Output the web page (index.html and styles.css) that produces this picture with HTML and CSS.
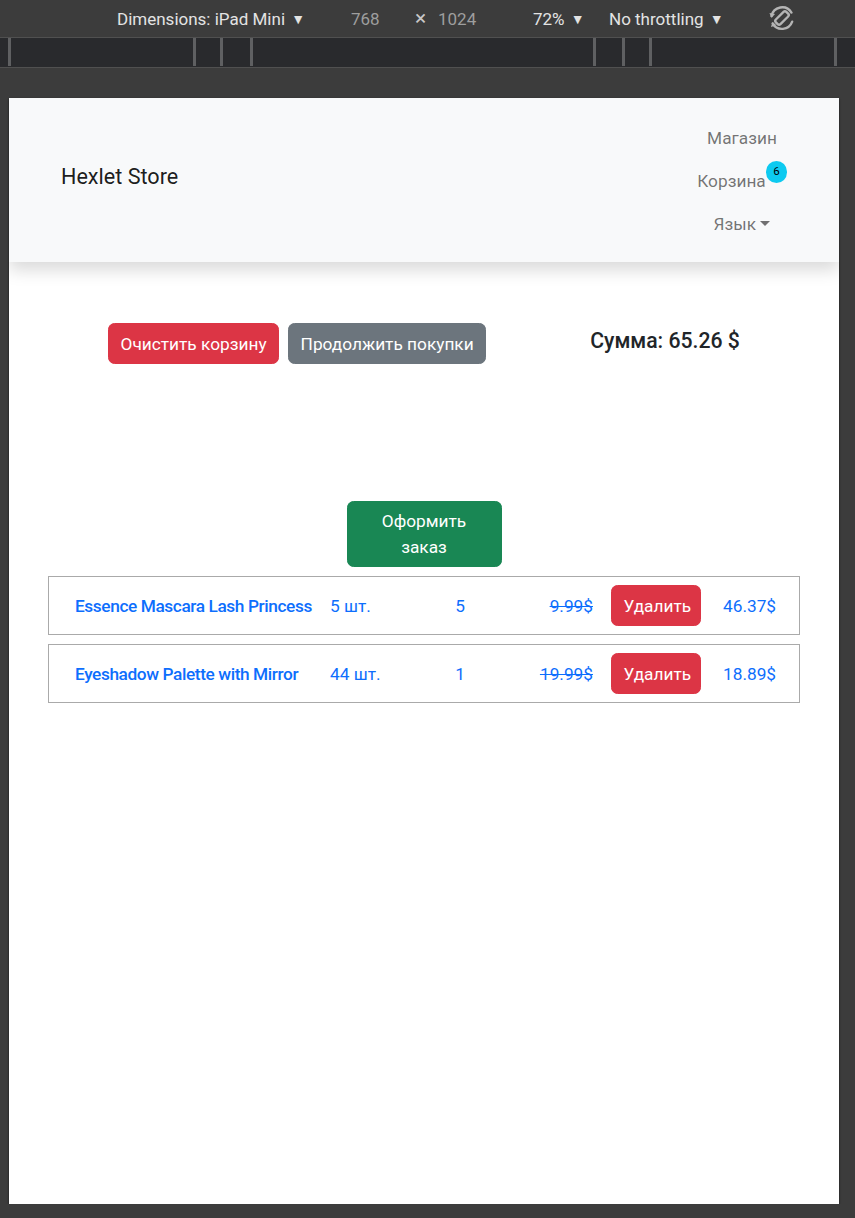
FILE: index.html
```html
<!DOCTYPE html>
<html lang="ru">
<head>
    <meta charset="UTF-8">
    <meta name="viewport" content="width=device-width, initial-scale=1.0">
    <title>Hexlet Store</title>
    <link rel="stylesheet" href="styles.css">
</head>
<body>
    <div class="devbar">
        <span class="dev dims">Dimensions: iPad Mini <span class="tri">&#9660;</span></span>
        <span class="dev num w768">768</span>
        <span class="dev cross">&#215;</span>
        <span class="dev num h1024">1024</span>
        <span class="dev zoom">72% <span class="tri">&#9660;</span></span>
        <span class="dev throttle">No throttling <span class="tri">&#9660;</span></span>
        <svg class="rotate" viewBox="0 0 24 24" width="26" height="26">
            <g fill="none" stroke="#b4b4b4" stroke-width="2.2" stroke-linecap="round">
                <rect x="9" y="5.2" width="6" height="13.6" rx="1.8" transform="rotate(45 12 12)"/>
                <path d="M2.3 10.3A10 10 0 0 1 20.7 7"/>
                <path d="M21.4 15.4A10 10 0 0 1 3.3 17"/>
            </g>
            <path d="M0.4 7.4L2.3 11.8L5.6 8.4Z" fill="#b4b4b4"/>
            <path d="M1.8 20.4L3.3 15.6L6.8 18.6Z" fill="#b4b4b4"/>
        </svg>
    </div>
    <div class="ruler">
        <span class="seg s1"></span>
        <span class="seg s2"></span>
        <span class="seg s3"></span>
        <span class="seg s4"></span>
        <span class="seg s5"></span>
        <span class="seg s6"></span>
        <span class="seg s7"></span>
        <span class="seg s8"></span>
    </div>

    <div class="viewport">
        <nav class="navbar">
            <a class="brand" href="#">Hexlet Store</a>
            <ul class="nav">
                <li><a class="nav-link" href="#">Магазин</a></li>
                <li><a class="nav-link" href="#"><span class="cart-label">Корзина<span class="badge">6</span></span></a></li>
                <li><a class="nav-link dropdown" href="#">Язык</a></li>
            </ul>
        </nav>

        <main class="cart">
            <div class="actions">
                <button class="btn btn-danger">Очистить корзину</button>
                <button class="btn btn-secondary">Продолжить покупки</button>
                <h5 class="sum">Сумма: 65.26 $</h5>
            </div>

            <button class="btn btn-success checkout">Оформить заказ</button>

            <div class="items">
                <div class="item">
                    <a class="name" href="#">Essence Mascara Lash Princess</a>
                    <span>5 шт.</span>
                    <span class="count">5</span>
                    <span class="price"><s>9.99$</s></span>
                    <button class="btn btn-danger remove">Удалить</button>
                    <span class="total">46.37$</span>
                </div>
                <div class="item">
                    <a class="name" href="#">Eyeshadow Palette with Mirror</a>
                    <span>44 шт.</span>
                    <span class="count">1</span>
                    <span class="price"><s>19.99$</s></span>
                    <button class="btn btn-danger remove">Удалить</button>
                    <span class="total">18.89$</span>
                </div>
            </div>
        </main>
    </div>
</body>
</html>
```

FILE: styles.css
```css
*{
    margin: 0;
    padding: 0;
    box-sizing: border-box;
}
body{
    background-color: #3c3c3c;
    font-family: Roboto, "Noto Sans", sans-serif;
}

/* devtools toolbar */
.devbar{
    height: 37px;
    display: flex;
    align-items: center;
    color: #e3e3e3;
    font-size: 17px;
}
.dev{
    display: inline-block;
    white-space: nowrap;
}
.dims{
    margin-left: 117px;
    width: 234px;
}
.tri{
    font-size: 14px;
    margin-left: 2px;
    vertical-align: 1px;
}
.num{
    color: #9e9e9e;
}
.w768{
    width: 64px;
}
.cross{
    width: 23px;
    font-size: 21px;
    line-height: 1;
    color: #c8c8c8;
}
.h1024{
    width: 95px;
}
.zoom{
    width: 76px;
}
.throttle{
    width: 160px;
}
.rotate{
    display: block;
    margin-top: -2px;
}

.ruler{
    height: 31px;
    display: flex;
    background-color: #292a2d;
    border-top: 1px solid #505050;
    border-bottom: 1px solid #505050;
}
.seg{
    height: 28px;
    border-right: 3px solid #5f6062;
}
.s1{ width: 11px; }
.s2{ width: 185px; }
.s3{ width: 27px; }
.s4{ width: 30px; }
.s5{ width: 343px; }
.s6{ width: 29px; }
.s7{ width: 27px; }
.s8{ width: 185px; }

/* emulated page */
.viewport{
    margin: 30px 0 0 9px;
    width: 830px;
    height: 1106px;
    background-color: #fff;
    box-shadow: 0 1px 2px rgba(0,0,0,.7);
    font-size: 17.28px;
    line-height: 1.5;
    color: #212529;
    overflow: hidden;
}

.navbar{
    position: relative;
    height: 164px;
    display: flex;
    align-items: center;
    justify-content: space-between;
    padding: 0 42px 0 52px;
    background-color: #f8f9fa;
    box-shadow: 0 8px 16px rgba(0,0,0,.15);
}
.brand{
    font-size: 21.6px;
    color: rgba(0,0,0,.9);
    text-decoration: none;
    margin-top: -6px;
}
.nav{
    list-style: none;
    width: 110px;
    text-align: center;
    margin-top: 2px;
}
.nav-link{
    display: block;
    padding: 8.6px 0;
    line-height: 26px;
    color: rgba(0,0,0,.55);
    text-decoration: none;
}
.cart-label{
    position: relative;
    margin-right: 21px;
}
.badge{
    position: absolute;
    left: 100%;
    top: -10px;
    width: 21.6px;
    height: 21.6px;
    border-radius: 50%;
    background-color: #0dcaf0;
    color: #000;
    font-size: 11.5px;
    line-height: 21.6px;
    text-align: center;
}
.dropdown::after{
    content: "";
    display: inline-block;
    margin-left: .255em;
    vertical-align: .255em;
    border-top: .3em solid;
    border-right: .3em solid transparent;
    border-left: .3em solid transparent;
}

.btn{
    font-family: inherit;
    font-size: 17.28px;
    line-height: 26px;
    padding: 6.5px 11.5px;
    border: 1px solid transparent;
    border-radius: 6.5px;
    color: #fff;
    cursor: pointer;
}
.btn-danger{
    background-color: #dc3545;
    border-color: #dc3545;
}
.btn-secondary{
    background-color: #6c757d;
    border-color: #6c757d;
}
.btn-success{
    background-color: #198754;
    border-color: #198754;
}

.actions{
    display: flex;
    align-items: center;
    gap: 9px;
    margin-top: 61px;
    padding-left: 99px;
}
.sum{
    margin: 0 0 6px 95px;
    font-size: 21.2px;
    font-weight: 500;
    line-height: 1.2;
}

.checkout{
    display: block;
    width: 155px;
    margin: 137px auto 9px;
    padding: 6px 26px;
}

.items{
    display: flex;
    flex-direction: column;
    gap: 9px;
    margin: 0 39px;
}
.item{
    height: 59px;
    display: grid;
    grid-template-columns: 255px 90px 80px 93px 108px 1fr;
    align-items: center;
    padding-left: 26px;
    border: 1px solid #aaa;
    color: #0d6efd;
}
.item > span,
.name{
    margin-top: 3px;
}
.name{
    font-weight: 500;
    letter-spacing: -0.4px;
    color: #0d6efd;
    text-decoration: none;
    white-space: nowrap;
}
.count{
    text-align: center;
}
.price{
    text-align: right;
}
.remove{
    justify-self: end;
    width: 90px;
}
.total{
    padding-left: 22px;
}
```
